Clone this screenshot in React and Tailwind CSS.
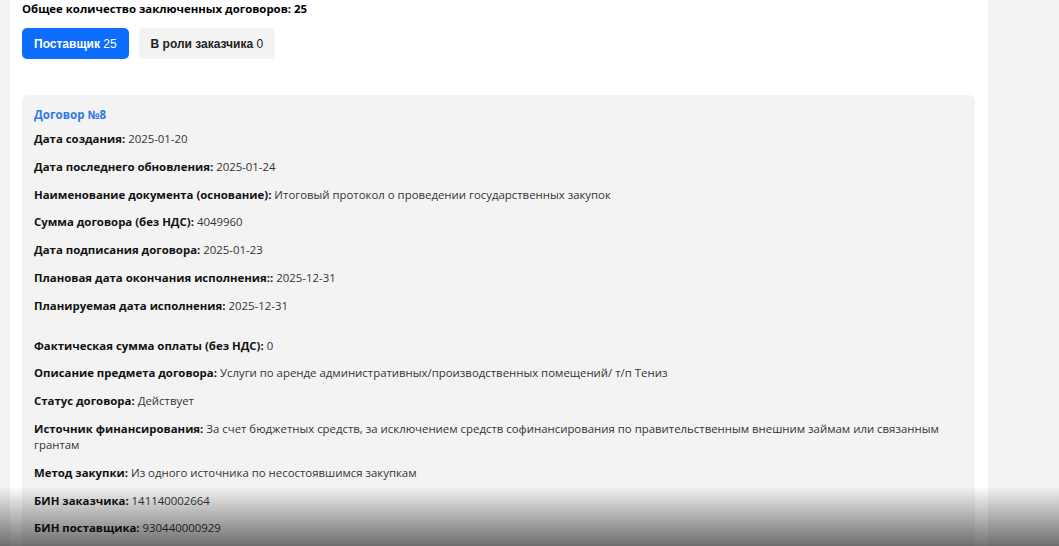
const rows = [
  ["Дата создания:", "2025-01-20"],
  ["Дата последнего обновления:", "2025-01-24"],
  [
    "Наименование документа (основание):",
    "Итоговый протокол о проведении государственных закупок",
  ],
  ["Сумма договора (без НДС):", "4049960"],
  ["Дата подписания договора:", "2025-01-23"],
  ["Плановая дата окончания исполнения::", "2025-12-31"],
  ["Планируемая дата исполнения:", "2025-12-31"],
  null,
  ["Фактическая сумма оплаты (без НДС):", "0"],
  [
    "Описание предмета договора:",
    "Услуги по аренде административных/производственных помещений/ т/п Тениз",
  ],
  ["Статус договора:", "Действует"],
  [
    "Источник финансирования:",
    "За счет бюджетных средств, за исключением средств софинансирования по правительственным внешним займам или связанным грантам",
  ],
  ["Метод закупки:", "Из одного источника по несостоявшимся закупкам"],
  ["БИН заказчика:", "141140002664"],
  ["БИН поставщика:", "930440000929"],
];

export default function App() {
  return (
    <div className="relative h-[546px] overflow-hidden bg-[#f3f3f3] font-['Open_Sans',sans-serif] text-[#212529]">
      <div className="ml-[10px] h-full w-[978px] bg-white px-3">
        <div className="pt-[1px] text-[11.4px] font-bold leading-[16px] text-black">
          Общее количество заключенных договоров: 25
        </div>

        <div className="mt-[11px] flex gap-[10px] font-['Liberation_Sans',sans-serif] text-[12px]">
          <button className="h-[31px] rounded-[5px] bg-[#0d6efd] px-3 text-white">
            <span className="font-bold">Поставщик</span> 25
          </button>
          <button className="h-[31px] rounded-[5px] bg-[#f3f3f3] px-3 text-[#222]">
            <span className="font-bold">В роли заказчика</span> 0
          </button>
        </div>

        <div className="mt-[36px] w-[953px] rounded-[6px] bg-[#f3f3f3] px-3 pt-[12px] pb-4">
          <div className="mb-[8px] text-[11.6px] font-bold leading-[16px] text-[#2f7ae5]">
            Договор №8
          </div>
          {rows.map((row, i) =>
            row ? (
              <p key={i} className="mb-[11.8px] text-[11.4px] leading-[16px] text-[#333]">
                <span className="font-bold text-[#111]">{row[0]}</span> {row[1]}
              </p>
            ) : (
              <div key={i} className="h-[12px]" />
            ),
          )}
        </div>
      </div>

      <div className="pointer-events-none absolute inset-x-0 bottom-0 h-[60px] bg-gradient-to-b from-transparent to-[rgba(0,0,0,0.55)]" />
    </div>
  );
}
